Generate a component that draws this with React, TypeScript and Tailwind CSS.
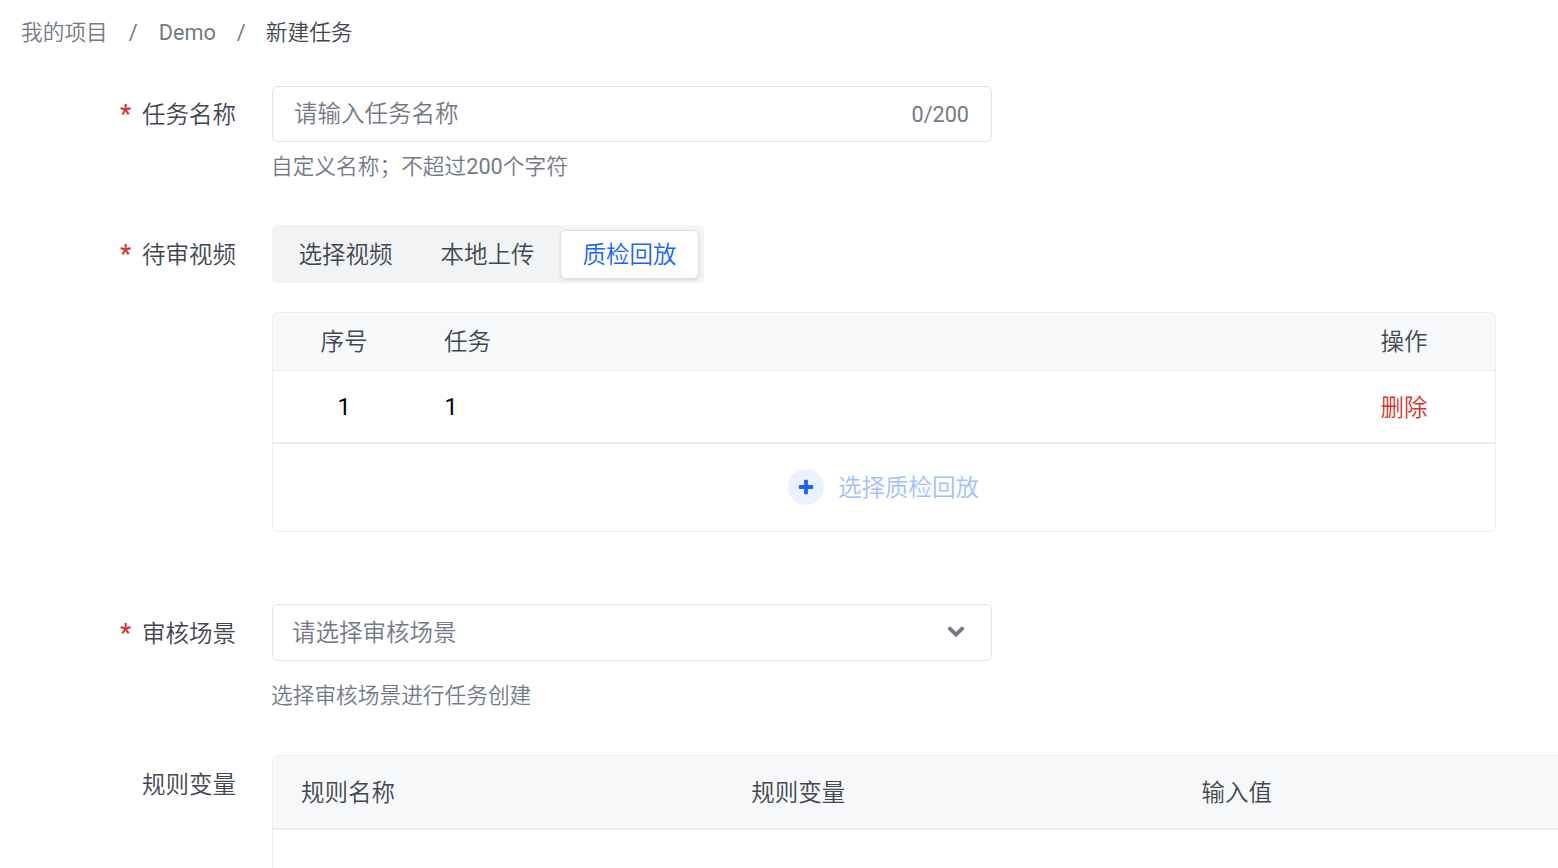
import React from "react";

interface FormRowProps {
  label: string;
  required?: boolean;
  className?: string;
  labelClassName: string;
  children: React.ReactNode;
}

const FormRow: React.FC<FormRowProps> = ({
  label,
  required,
  className = "",
  labelClassName,
  children,
}) => (
  <div className={`flex items-start ${className}`}>
    <div
      className={`flex w-[272px] shrink-0 items-center justify-end gap-[11px] pt-[2px] pr-9 text-[#41464f] ${labelClassName}`}
    >
      {required && (
        <span className="h-8 text-[25px] leading-[31px] font-medium text-[#d7312a]">
          *
        </span>
      )}
      <span>{label}</span>
    </div>
    {children}
  </div>
);

const tabs = ["选择视频", "本地上传", "质检回放"];
const ruleColumns = ["规则名称", "规则变量", "输入值"];
const videoTasks = [{ index: 1, name: "1" }];

const Breadcrumb = () => (
  <nav className="flex h-8 items-center pl-[21px] text-[21.7px] text-[#737a87]">
    <span>我的项目</span>
    <span className="ml-[21px] font-normal">/</span>
    <span className="ml-[21px] font-normal">Demo</span>
    <span className="ml-[21px] font-normal">/</span>
    <span className="ml-5 text-[#41464f]">新建任务</span>
  </nav>
);

const VideoTable = () => (
  <div className="mt-[29px] h-[220px] w-[1224px] overflow-hidden rounded-md border border-[#eaedf1]">
    <div className="flex h-[58px] items-center border-b border-[#eaedf1] bg-[#f7f8fa] text-[#41464f]">
      <span className="w-[142px] text-center">序号</span>
      <span className="flex-1 pl-[29px]">任务</span>
      <span className="w-[182px] text-center">操作</span>
    </div>
    {videoTasks.map((task) => (
      <div
        key={task.index}
        className="flex h-[73px] items-center border-b-2 border-[#e8ecf0] text-black"
      >
        <span className="w-[142px] text-center font-normal">{task.index}</span>
        <span className="flex-1 pl-[29.5px] font-normal">{task.name}</span>
        <span className="w-[182px] pt-[2px] text-center text-[#d7312a]">
          删除
        </span>
      </div>
    ))}
    <div className="flex h-[87px] items-center justify-center gap-[14px] pr-px text-[#a0bfff]">
      <span className="mb-[2px] flex size-9 items-center justify-center rounded-full bg-[#ebf1ff]">
        <svg width="16" height="16" viewBox="0 0 16 16" fill="#1664ff">
          <rect x="6.1" y="0.8" width="3.8" height="14.4" rx="0.8" />
          <rect x="0.8" y="6.1" width="14.4" height="3.8" rx="0.8" />
        </svg>
      </span>
      <span>选择质检回放</span>
    </div>
  </div>
);

export default function App() {
  return (
    <div className="h-[868px] overflow-hidden bg-white pt-[17px] font-['Roboto','Noto_Sans_CJK_SC',sans-serif] text-[23.5px] leading-8 font-[350] whitespace-nowrap">
      <Breadcrumb />

      <FormRow
        label="任务名称"
        required
        className="mt-[37px]"
        labelClassName="h-14"
      >
        <div>
          <div className="flex h-14 w-[720px] items-center justify-between rounded-md border border-[#dde2e9] pr-[22px] pl-[21px] text-[#737a87]">
            <span>请输入任务名称</span>
            <span className="pt-[2px] text-[21.6px] font-normal">0/200</span>
          </div>
          <p className="mt-[9px] -ml-px text-[21.7px] text-[#737a87]">
            自定义名称；不超过<span className="font-normal">200</span>个字符
          </p>
        </div>
      </FormRow>

      <FormRow
        label="待审视频"
        required
        className="mt-[42px]"
        labelClassName="h-[58px]"
      >
        <div>
          <div className="flex h-[58px] w-[432px] items-center rounded-md bg-[#f2f3f5] pl-[2px]">
            {tabs.map((tab, i) => (
              <span
                key={tab}
                className={
                  i === 2
                    ? "ml-[2px] flex h-[49px] w-[139px] items-center justify-center rounded-md border border-[#dde2e9] bg-white pt-px text-[#1664ff] shadow-sm"
                    : "flex h-[49px] w-[142px] items-center justify-center pt-[2px] pl-px text-[#41464f]"
                }
              >
                {tab}
              </span>
            ))}
          </div>
          <VideoTable />
        </div>
      </FormRow>

      <FormRow
        label="审核场景"
        required
        className="mt-[72px]"
        labelClassName="h-[57px]"
      >
        <div>
          <div className="flex h-[57px] w-[720px] items-center justify-between rounded-md border border-[#dde2e9] pr-[26px] pl-[19px] text-[#737a87]">
            <span>请选择审核场景</span>
            <svg
              className="mb-[2px]"
              width="18"
              height="12"
              viewBox="0 0 18 12"
              fill="none"
            >
              <path
                d="M2.9 2.6 9 8.6l6.1-6"
                stroke="#737a87"
                strokeWidth="3.8"
                strokeLinecap="round"
              />
            </svg>
          </div>
          <p className="mt-[19px] -ml-px text-[21.7px] text-[#737a87]">
            选择审核场景进行任务创建
          </p>
        </div>
      </FormRow>

      <FormRow label="规则变量" className="mt-[43px]" labelClassName="h-[58px]">
        <div className="h-[200px] flex-1 overflow-hidden rounded-tl-md border-t border-l border-[#eaedf1]">
          <div className="flex h-[74px] items-center border-b-2 border-[#eceef2] bg-[#f7f8fa] pt-[2px] text-[#41464f]">
            {ruleColumns.map((column) => (
              <span key={column} className="w-[450.25px] shrink-0 pl-7">
                {column}
              </span>
            ))}
          </div>
        </div>
      </FormRow>
    </div>
  );
}
